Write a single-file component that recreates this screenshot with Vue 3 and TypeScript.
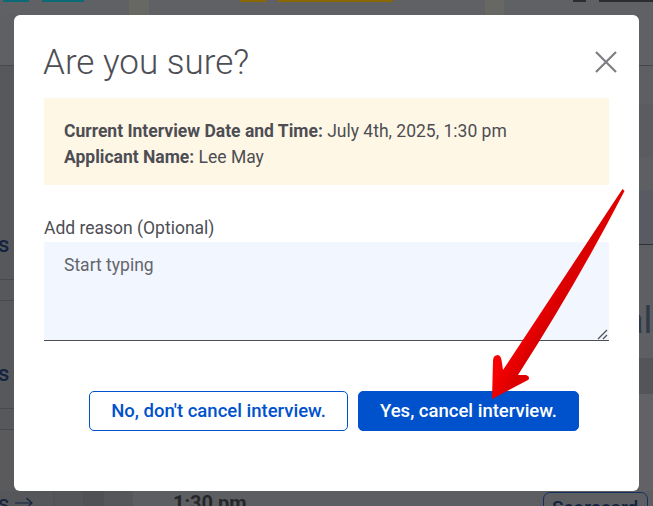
<script setup lang="ts">
const title = 'Are you sure?'
</script>

<template>
  <div class="page">
    <div class="backdrop">
      <div class="top-strip">
        <span class="tag teal t1"></span>
        <span class="tag teal t2"></span>
        <span class="tag amber a1"></span>
        <span class="tag amber a2"></span>
        <span class="tag dark d1"></span>
        <span class="tag dark d2"></span>
      </div>
      <div class="middle">
        <div class="col-left">
          <div class="l-row l1"></div>
          <div class="l-row l2"><span class="frag">s</span></div>
          <div class="l-row l3"></div>
          <div class="l-row l4"><span class="frag">s</span></div>
          <div class="l-row l5"></div>
          <div class="l-row l6"></div>
        </div>
        <div class="col-right">
          <div class="r-row r1"></div>
          <div class="r-row r2"></div>
          <div class="r-row r3"></div>
          <div class="r-row r4"></div>
          <div class="r-row r5"></div>
          <div class="r-row r6"><span class="al">al</span></div>
          <div class="r-row r7"></div>
          <div class="r-row r8"></div>
        </div>
      </div>
      <div class="bottom-strip">
        <span class="frag link">
          s
          <svg class="link-arrow" width="18" height="12" viewBox="0 0 18 12">
            <path d="M0 6 H17 M11.5 1 L17 6 L11.5 11" stroke="#14233f" stroke-width="1.2" fill="none" />
          </svg>
        </span>
        <span class="time">1:30 pm</span>
        <span class="score">Scorecard</span>
      </div>
    </div>

    <section class="modal">
      <header class="head">
        <h1>{{ title }}</h1>
        <svg class="close" width="24" height="24" viewBox="0 0 24 24" aria-label="Close">
          <path d="M2 2 L22 22 M22 2 L2 22" stroke="#7d7e82" stroke-width="2.2" fill="none" />
        </svg>
      </header>
      <div class="notice">
        <p><b>Current Interview Date and Time:</b> July 4th, 2025, 1:30 pm</p>
        <p><b>Applicant Name:</b> Lee May</p>
      </div>
      <label class="field">
        <span>Add reason (Optional)</span>
        <span class="area">
          <textarea placeholder="Start typing"></textarea>
          <svg class="grip" width="11" height="11" viewBox="0 0 11 11">
            <path d="M1 10 L10 1 M6 10 L10 6" stroke="#55565b" stroke-width="1.4" fill="none" />
          </svg>
        </span>
      </label>
      <div class="actions">
        <button class="btn ghost">No, don't cancel interview.</button>
        <button class="btn solid">Yes, cancel interview.</button>
      </div>
    </section>

    <svg class="arrow" width="653" height="506" viewBox="0 0 653 506">
      <defs>
        <linearGradient id="red" gradientUnits="userSpaceOnUse" x1="498" y1="372" x2="528" y2="388">
          <stop offset="0" stop-color="#f70000" />
          <stop offset="0.6" stop-color="#d80000" />
          <stop offset="1" stop-color="#ee0000" />
        </linearGradient>
      </defs>
      <path
        d="M622.5 189 L624.5 191 Q577 283 518 375 L526 375 Q531 377 528 380 L492 399 L493 361 Q493 355 498 355 Q501 356 501.5 360 L503 370 Z"
        fill="url(#red)"
      />
    </svg>
  </div>
</template>

<style>
html, body { margin: 0; background: #5a5b5f; }
</style>

<style scoped>
.page {
  position: relative;
  width: 653px;
  height: 506px;
  overflow: hidden;
  font-family: Roboto, "Liberation Sans", sans-serif;
  color: #4d4e54;
}
.backdrop {
  width: 653px;
  height: 506px;
  display: flex;
  flex-direction: column;
  background: #5a5b5f;
  color: #14233f;
}
.top-strip {
  height: 15px;
  display: flex;
  align-items: flex-start;
  background: linear-gradient(90deg, #606165 0 129px, #676763 129px 149px, #606165 149px 485px, #676763 485px 504px, #606165 504px);
}
.tag { height: 2px; flex: none; }
.teal { background: #0c6a76; }
.amber { background: #8a6706; }
.dark { background: #2c2d30; }
.t1 { margin-left: 3px; width: 26px; }
.t2 { margin-left: 13px; width: 42px; }
.a1 { margin-left: 156px; width: 26px; }
.a2 { margin-left: 12px; width: 115px; }
.d1 { margin-left: 180px; width: 13px; }
.d2 { margin-left: 13px; width: 54px; }

.middle {
  height: 476px;
  display: flex;
  justify-content: space-between;
}
.col-left, .col-right {
  width: 14px;
  display: flex;
  flex-direction: column;
  overflow: hidden;
}
.l-row { box-sizing: border-box; border-bottom: 1px solid #48494c; background: #57585b; }
.l1 { height: 51px; background: #5f6063; }
.l2 { height: 214px; padding-top: 166px; }
.l3 { height: 21px; }
.l4 { height: 108px; padding-top: 60px; }
.l5 { height: 21px; }
.l6 { height: 61px; border-bottom: 0; background: #5a5a5d; }
.frag {
  display: block;
  margin-left: -2px;
  font-size: 22px;
  line-height: 26px;
  font-weight: 500;
  color: #14233f;
}
.r-row { box-sizing: border-box; }
.r1 { height: 51px; background: #606165; border-bottom: 1px solid #45464a; }
.r2 { height: 38px; background: #5e5f63; }
.r3 { height: 53px; background: #5b5c60; }
.r4 { height: 33px; background: #5e5f63; }
.r5 { height: 55px; background: #595b62; border-bottom: 1px solid #2f3035; }
.r6 { height: 113px; background: #5e5f62; padding-top: 55px; }
.r7 { height: 36px; background: #545558; }
.r8 { height: 97px; background: #626266; }
.al {
  display: block;
  margin-left: -15px;
  font-size: 36px;
  line-height: 42px;
  color: #2f3948;
  white-space: nowrap;
}

.bottom-strip {
  height: 15px;
  display: flex;
  align-items: flex-start;
  background: linear-gradient(90deg, #56575a 0 53px, #4f5053 53px 54px, #545558 54px 83px, #4f5053 83px 84px, #505154 84px 103px, #4f5053 103px 104px, #56575a 104px 133px, #5d5e62 133px);
}
.link {
  width: 140px;
  flex: none;
  display: flex;
  align-items: flex-start;
  gap: 6px;
  white-space: nowrap;
  font-weight: 400;
}
.link-arrow { margin-top: 6px; flex: none; }
.time {
  margin-left: 35px;
  font-size: 20px;
  font-weight: 700;
  line-height: 24px;
  color: #25262a;
  white-space: nowrap;
  flex: none;
}
.score {
  margin-left: 296px;
  width: 105px;
  height: 30px;
  margin-top: 1px;
  flex: none;
  box-sizing: border-box;
  border: 1px solid #15305f;
  border-radius: 7px;
  font-size: 19px;
  font-weight: 500;
  text-align: center;
  line-height: 26px;
  padding-top: 2px;
  color: #14233f;
}

.modal {
  position: absolute;
  left: 14px;
  top: 15px;
  width: 625px;
  height: 476px;
  box-sizing: border-box;
  background: #fff;
  border-radius: 6px;
  padding: 24px 30px 0;
  display: flex;
  flex-direction: column;
}
.head {
  display: flex;
  justify-content: space-between;
  align-items: center;
  height: 46px;
  margin-bottom: 13px;
}
h1 {
  margin: 2px 0 0 -1px;
  font-size: 35px;
  font-weight: 300;
  line-height: 46px;
  color: #4d4e54;
}
.close { margin-right: -9px; }
.notice {
  background: #fff7e6;
  padding: 20px;
  height: 87px;
  box-sizing: border-box;
  font-size: 17.5px;
  line-height: 26px;
}
.notice p { margin: 0; }
.notice b { font-weight: 700; }
.field { display: flex; flex-direction: column; margin-top: 32px; font-size: 17.5px; line-height: 22px; }
.area { position: relative; display: block; margin-top: 3px; }
.grip { position: absolute; right: 1px; bottom: 1px; pointer-events: none; }
textarea {
  display: block;
  width: 100%;
  height: 99px;
  box-sizing: border-box;
  padding: 12px 20px;
  background: #f2f6fe;
  border: 0;
  border-bottom: 1px solid #4d4e54;
  font: 17.5px/22px Roboto, "Liberation Sans", sans-serif;
  outline: none;
  resize: none;
}
textarea::placeholder { color: #63656b; opacity: 1; }
.actions { display: flex; gap: 10px; margin-top: 50px; margin-left: 45px; }
.btn {
  height: 40px;
  box-sizing: border-box;
  border-radius: 5px;
  border: 1px solid #0052cc;
  font: 500 18.5px Roboto, "Liberation Sans", sans-serif;
  padding: 0;
  cursor: pointer;
}
.ghost { width: 259px; background: #fff; color: #0052cc; }
.solid { width: 221px; background: #0052cc; color: #fff; }
.arrow { position: absolute; inset: 0; pointer-events: none; }
</style>
